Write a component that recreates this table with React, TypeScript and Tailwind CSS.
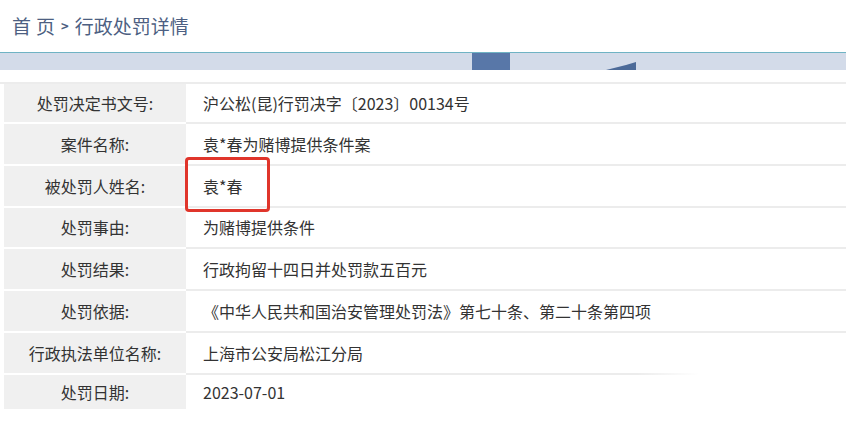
const rows: [string, string][] = [
  ["处罚决定书文号:", "沪公松(昆)行罚决字〔2023〕00134号"],
  ["案件名称:", "袁*春为赌博提供条件案"],
  ["被处罚人姓名:", "袁*春"],
  ["处罚事由:", "为赌博提供条件"],
  ["处罚结果:", "行政拘留十四日并处罚款五百元"],
  ["处罚依据:", "《中华人民共和国治安管理处罚法》第七十条、第二十条第四项"],
  ["行政执法单位名称:", "上海市公安局松江分局"],
  ["处罚日期:", "2023-07-01"],
];

export default function App() {
  return (
    <div
      className="h-[421px] w-[858px] overflow-hidden bg-white text-[#333]"
      style={{ fontFamily: '"Noto Sans CJK SC", "Noto Sans", sans-serif' }}
    >
      {/* breadcrumb */}
      <div className="flex h-[52px] items-center pl-[12px] text-[19px] text-[#4d5f82]">
        <span className="tracking-[5px]">首页</span>
        <span className="mr-[6px] ml-[1px] text-[13px] font-bold">&gt;</span>
        <span>行政处罚详情</span>
      </div>

      {/* banner strip */}
      <div className="relative mr-[12px] h-[18px] border-t border-[#6fb3c4] bg-[#d3dbe9]">
        <div className="absolute top-0 left-[472px] h-[17px] w-[38px] bg-[#5877a8]" />
        <svg className="absolute top-[9px] left-[606px]" width="30" height="8" viewBox="0 0 30 8">
          <path d="M0 8 L20 3 L30 0 L30 8 Z" fill="#4c6a98" />
        </svg>
      </div>

      <div className="mt-[12px] mr-[12px] h-[2px] bg-[#ececec]" />

      {/* detail table */}
      <div className="mr-[12px] ml-[4px] text-[16px]">
        {rows.map(([label, value], i) => {
          const last = i === rows.length - 1;
          return (
            <div
              key={label}
              className={`flex ${i === 0 ? "h-[40px]" : last ? "h-[34px]" : "h-[41.8px]"}`}
            >
              <div
                className={`flex w-[182px] shrink-0 items-center justify-center bg-[#f0f0f0] ${last ? "" : "border-b-2 border-white"}`}
              >
                {label}
              </div>
              <div
                className={`relative flex flex-1 items-center pl-[17px] ${last ? "" : "border-b-2 border-[#ececec]"}`}
              >
                {value}
                {i === 2 && (
                  <span className="absolute top-[-9px] left-[-1px] h-[55px] w-[85px] rounded-[4px] border-[3px] border-[#e0352b]" />
                )}
                {i === rows.length - 2 && (
                  <span className="absolute right-0 bottom-[-2px] h-[6px] w-[210px] bg-gradient-to-r from-transparent to-white to-[30%]" />
                )}
              </div>
            </div>
          );
        })}
      </div>
    </div>
  );
}
